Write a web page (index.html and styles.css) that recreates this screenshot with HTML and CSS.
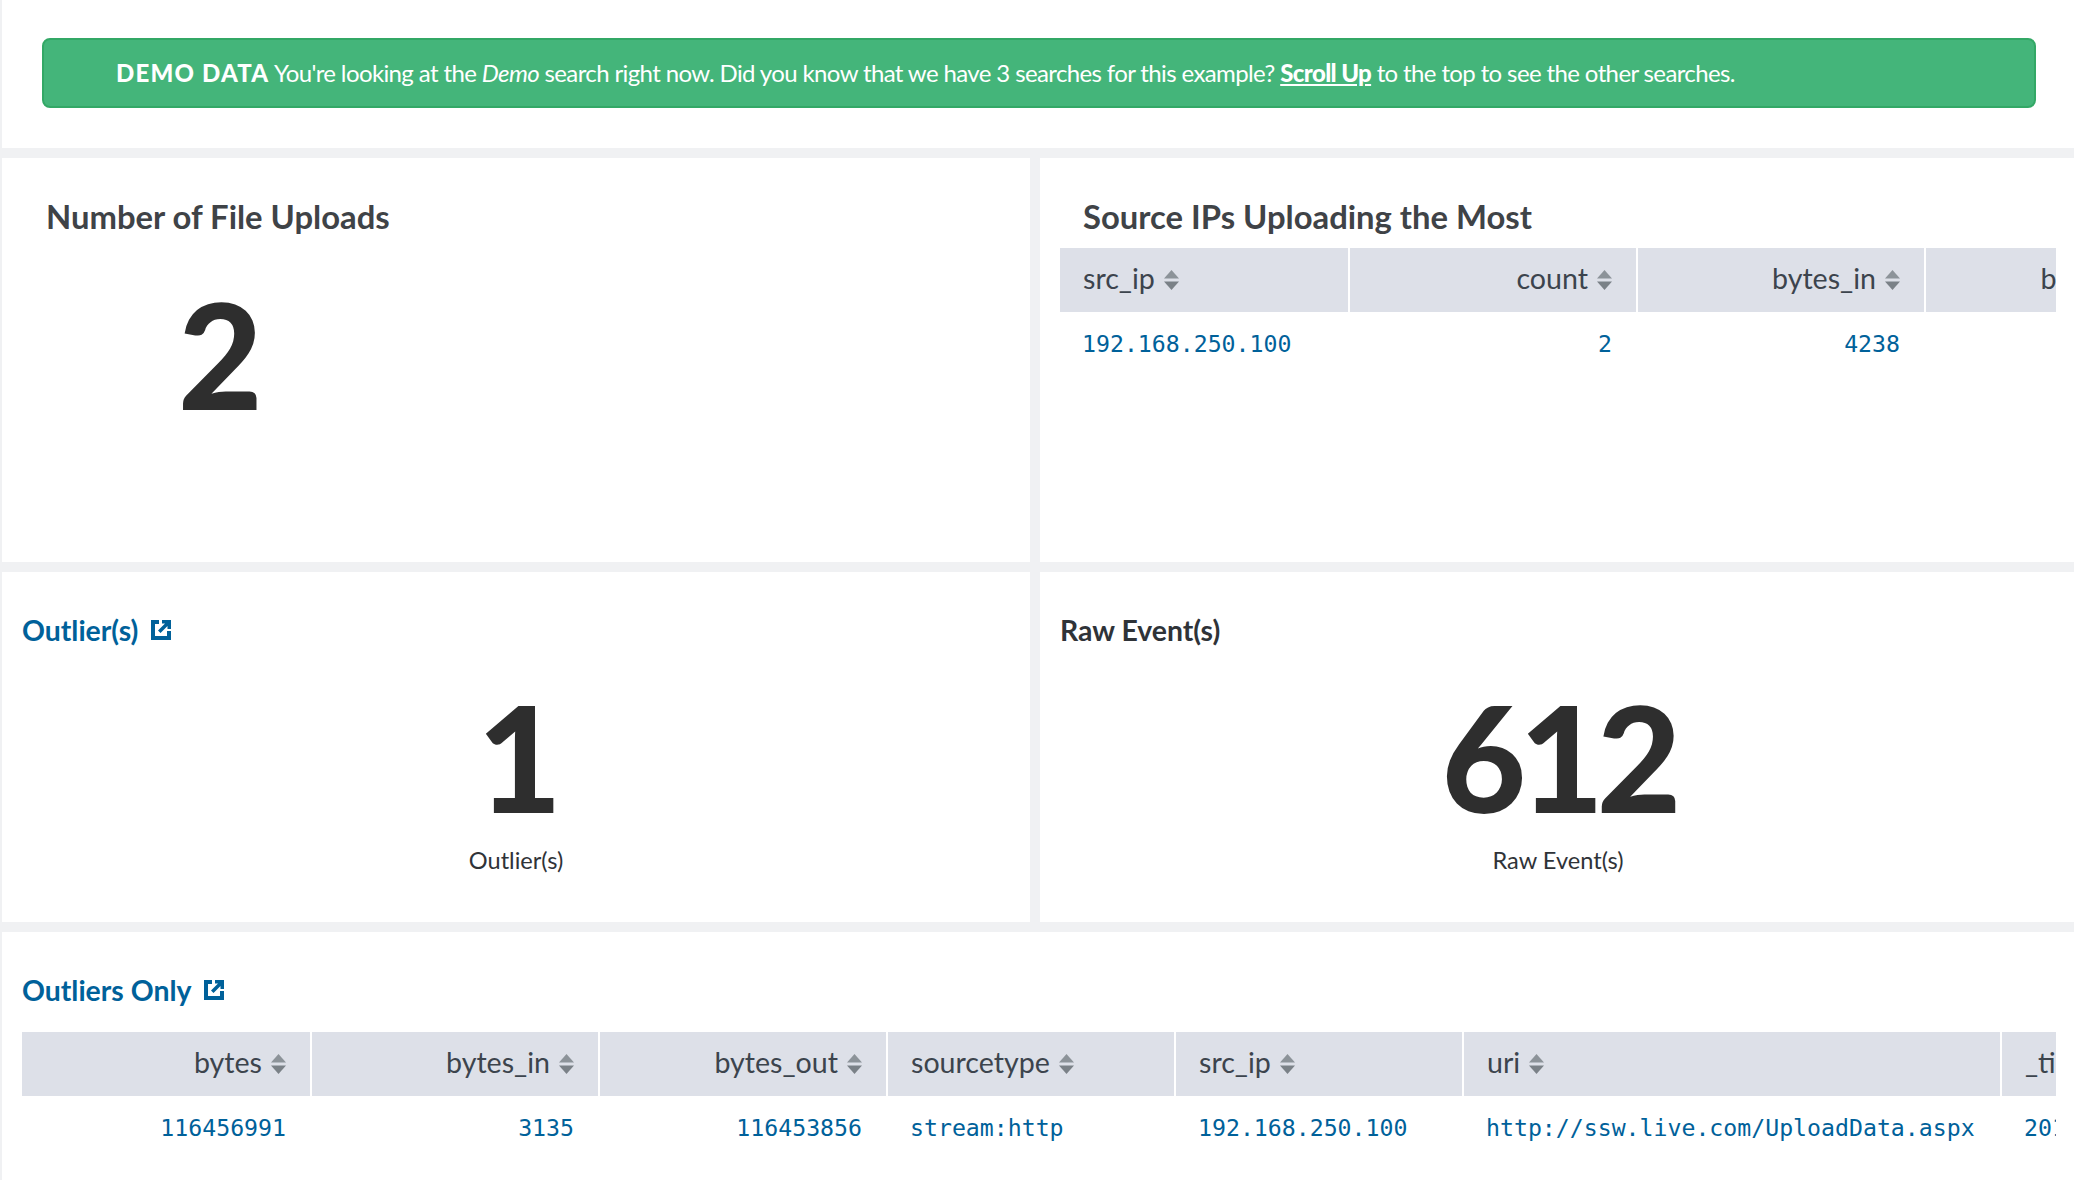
FILE: index.html
```html
<!DOCTYPE html>
<html lang="en">
<head>
<meta charset="utf-8">
<title>Demo dashboard</title>
<link rel="stylesheet" href="styles.css">
</head>
<body>
<svg class="defs" width="0" height="0" aria-hidden="true">
  <symbol id="sort" viewBox="0 0 15 20"><path class="up" d="M7.5 0 15 8.5H0z"/><path class="down" d="M0 11.5h15L7.5 20z"/></symbol>
  <symbol id="ext" viewBox="0 0 20 20"><path d="M0 0h8v4H4v12h12v-5h4v9H0z"/><path d="M11 0h9v9h-3.5V6l-7 7L7 10.500l7-7h-3z"/></symbol>
</svg>
<main class="page">
  <section class="row row-banner">
    <div class="panel panel-full">
      <div class="banner"><strong class="tag">DEMO DATA</strong> You're looking at the <em>Demo</em> search right now. Did you know that we have 3 searches for this example? <a class="scroll" href="#">Scroll Up</a> to the top to see the other searches.</div>
    </div>
  </section>
  <section class="row row-top">
    <div class="panel panel-left pad-deep">
      <h2 class="title title-plain">Number of File Uploads</h2>
      <div class="single single-left">2</div>
    </div>
    <div class="panel panel-right">
      <h2 class="title title-plain title-table">Source IPs Uploading the Most</h2>
      <div class="clip">
        <table class="grid">
          <thead><tr>
            <th class="c288 l">src_ip<svg class="sort"><use href="#sort"/></svg></th>
            <th class="c288 r">count<svg class="sort"><use href="#sort"/></svg></th>
            <th class="c288 r">bytes_in<svg class="sort"><use href="#sort"/></svg></th>
            <th class="c288 r">bytes_out<svg class="sort"><use href="#sort"/></svg></th>
          </tr></thead>
          <tbody><tr>
            <td class="l">192.168.250.100</td><td class="r">2</td><td class="r">4238</td><td class="r">116456991</td>
          </tr></tbody>
        </table>
      </div>
    </div>
  </section>
  <section class="row row-mid">
    <div class="panel panel-left">
      <h2 class="title title-link"><a href="#">Outlier(s)</a><svg class="ext"><use href="#ext"/></svg></h2>
      <div class="single">1</div>
      <div class="caption">Outlier(s)</div>
    </div>
    <div class="panel panel-right">
      <h2 class="title title-dark">Raw Event(s)</h2>
      <div class="single">612</div>
      <div class="caption">Raw Event(s)</div>
    </div>
  </section>
  <section class="row row-bottom">
    <div class="panel panel-full">
      <h2 class="title title-link"><a href="#">Outliers Only</a><svg class="ext"><use href="#ext"/></svg></h2>
      <div class="clip">
        <table class="grid">
          <thead><tr>
            <th class="c288 r">bytes<svg class="sort"><use href="#sort"/></svg></th>
            <th class="c288 r">bytes_in<svg class="sort"><use href="#sort"/></svg></th>
            <th class="c288 r">bytes_out<svg class="sort"><use href="#sort"/></svg></th>
            <th class="c288 l">sourcetype<svg class="sort"><use href="#sort"/></svg></th>
            <th class="c288 l">src_ip<svg class="sort"><use href="#sort"/></svg></th>
            <th class="c538 l">uri<svg class="sort"><use href="#sort"/></svg></th>
            <th class="c288 l">_time<svg class="sort"><use href="#sort"/></svg></th>
          </tr></thead>
          <tbody><tr>
            <td class="r">116456991</td><td class="r">3135</td><td class="r">116453856</td><td class="l">stream:http</td><td class="l">192.168.250.100</td><td class="l">http://ssw.live.com/UploadData.aspx</td><td class="l">2017-08-10</td>
          </tr></tbody>
        </table>
      </div>
    </div>
  </section>
</main>
</body>
</html>
```
FILE: styles.css
```css
* { box-sizing: border-box; }
html, body { margin: 0; height: 100%; overflow: hidden; background: #f0f1f3; }
body { font-family: Lato, "Open Sans", sans-serif; color: #3c444d; }
.defs { position: absolute; }
.page { display: flex; flex-direction: column; gap: 10px; width: 2074px; height: 1180px; padding-left: 2px; }
.row { display: flex; gap: 10px; flex: none; }
.row-banner { height: 148px; }
.row-top { height: 404px; }
.row-mid { height: 350px; }
.row-bottom { height: 248px; }
.panel { background: #fff; display: flex; flex-direction: column; min-width: 0; }
.panel-full { flex: 1; padding: 0 20px; }
.row-banner .panel-full { padding: 38px 38px 0 40px; }
.panel-left { width: 1028px; }
.panel-right { width: 1034px; padding-left: 20px; padding-right: 18px; }
.banner { height: 70px; background: #44b57a; border: 2px solid #33a866; border-radius: 8px; color: #fff; font-size: 24px; line-height: 66px; padding-left: 72px; white-space: nowrap; letter-spacing: -0.62px; }
.tag { letter-spacing: 1.2px; font-weight: 900; }
.scroll { color: #fff; font-weight: 900; text-decoration: underline; }
.title { margin: 0; font-size: 32.8px; line-height: 36px; font-weight: 700; white-space: nowrap; }
.title-plain { color: #3f4347; padding-top: 41px; }
.pad-deep .title-plain { padding-left: 44px; }
.title-table { padding-left: 23px; }
.title-link, .title-dark { font-size: 28.4px; padding-top: 39px; display: flex; align-items: center; height: 77px; }
.row-mid .panel-left .title-link { padding-left: 20px; }
.title-link a { color: #00619a; text-decoration: none; }
.title-dark { color: #2f3338; }
.ext { width: 20px; height: 20px; margin-left: 13px; fill: #00619a; flex: none; }
.single { font-size: 146px; font-weight: 900; line-height: 130px; color: #2e2e2e; text-align: center; letter-spacing: -7px; margin-top: 43px; }
.single-left { text-align: left; padding-left: 176px; margin-top: 54px; }
.caption { font-size: 23.6px; line-height: 28px; color: #2f3338; text-align: center; margin-top: 24px; }
.clip { overflow: hidden; }
.row-bottom .clip { margin-top: 23px; margin-right: -2px; }
.row-top .clip { margin-top: 13px; }
.grid { border-collapse: separate; border-spacing: 0; table-layout: fixed; width: max-content; }
.c288 { width: 288px; }
.c538 { width: 538px; }
.grid th { background: #dde0e8; height: 64px; padding: 0 24px 5px 23px; font-size: 28.6px; font-weight: 400; color: #3c444d; white-space: nowrap; }
.grid th + th { border-left: 2px solid #fff; }
.grid td { height: 62px; padding: 0 24px 0 22px; font-family: "DejaVu Sans Mono", "Liberation Mono", monospace; font-size: 23.2px; color: #00619a; white-space: nowrap; }
.grid td + td { border-left: 2px solid transparent; }
.l { text-align: left; }
.r { text-align: right; }
.sort { width: 15px; height: 20px; margin-left: 9px; vertical-align: -1px; }
.up { fill: #8c9399; }
.down { fill: #7a8187; }
```
